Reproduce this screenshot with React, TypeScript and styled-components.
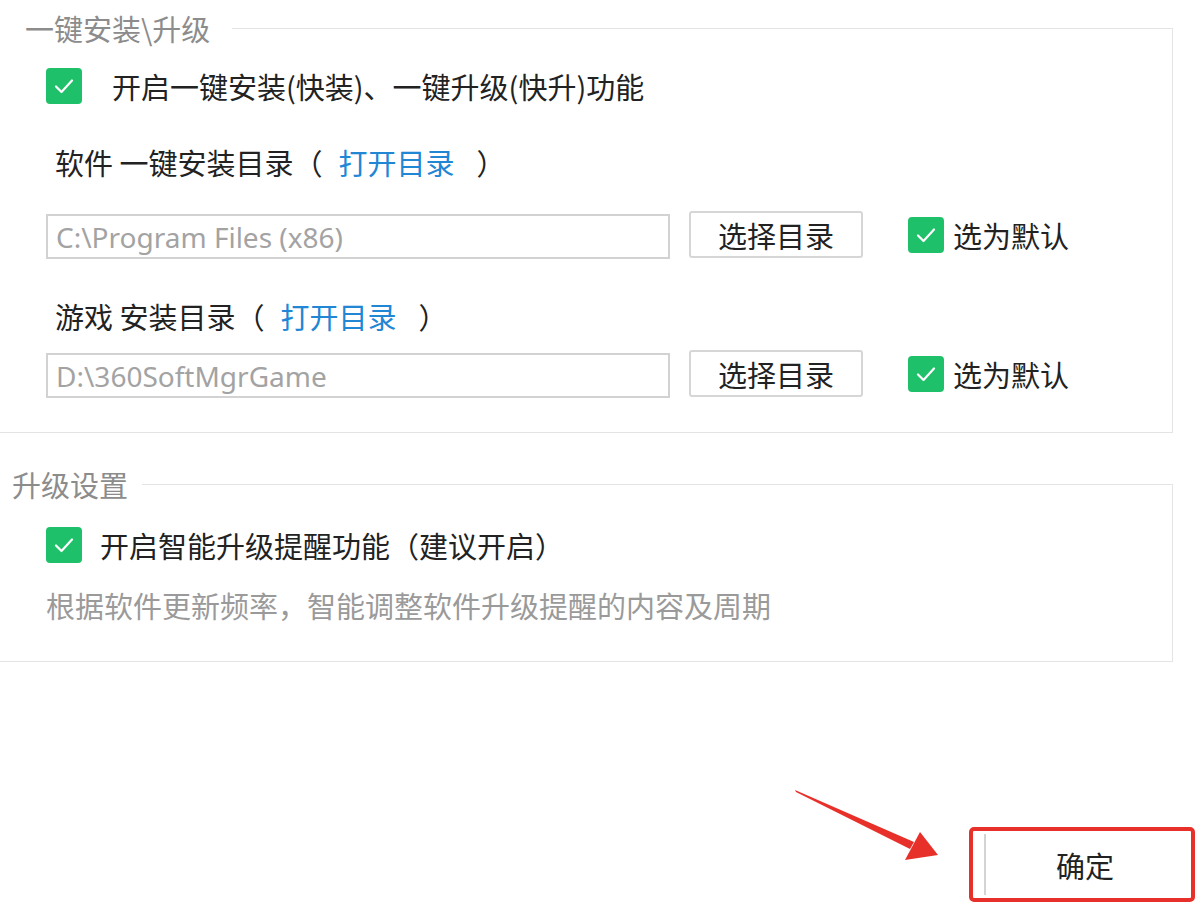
import styled, { createGlobalStyle } from "styled-components";

const GlobalStyle = createGlobalStyle`
  html, body {
    margin: 0;
    padding: 0;
    background: #ffffff;
  }
  body {
    font-family: "Noto Sans CJK SC", "Noto Sans", sans-serif;
    color: #222222;
  }
`;

function Check() {
  return (
    <Box>
      <svg width="22" height="22" viewBox="0 0 22 22">
        <polyline
          points="3,11.5 8.5,17 19,5.5"
          fill="none"
          stroke="#ffffff"
          strokeWidth="2.2"
          strokeLinecap="round"
          strokeLinejoin="round"
        />
      </svg>
    </Box>
  );
}

function Arrow() {
  return (
    <ArrowSvg width="156" height="80" viewBox="0 0 156 80">
      <polygon points="6,4 125,56 121,63 7,6" fill="#e8302a" />
      <polygon points="131,46 149,69 116,74" fill="#e8302a" />
    </ArrowSvg>
  );
}

export default function App() {
  return (
    <>
      <GlobalStyle />
      <Page>
        <Group>
          <Header>
            <Title $indent={25}>一键安装\升级</Title>
            <Rule $gap={22} />
          </Header>
          <Body $top={22} $bottom={34}>
            <CheckRow $gap={30}>
              <Check />
              <span>开启一键安装(快装)、一键升级(快升)功能</span>
            </CheckRow>
            <DirLabel $top={40}>
              软件 一键安装目录（<Link>打开目录</Link>）
            </DirLabel>
            <PathRow $top={30}>
              <PathInput readOnly value="C:\Program Files (x86)" />
              <PickButton>选择目录</PickButton>
              <CheckRow $gap={9}>
                <Check />
                <span>选为默认</span>
              </CheckRow>
            </PathRow>
            <DirLabel $top={39}>
              游戏 安装目录（<Link>打开目录</Link>）
            </DirLabel>
            <PathRow $top={15}>
              <PathInput readOnly value="D:\360SoftMgrGame" />
              <PickButton>选择目录</PickButton>
              <CheckRow $gap={9}>
                <Check />
                <span>选为默认</span>
              </CheckRow>
            </PathRow>
          </Body>
        </Group>

        <Group $top={33}>
          <Header>
            <Title $indent={12}>升级设置</Title>
            <Rule $gap={14} />
          </Header>
          <Body $top={25} $bottom={41}>
            <CheckRow $gap={18}>
              <Check />
              <span>开启智能升级提醒功能（建议开启）</span>
            </CheckRow>
            <Hint>根据软件更新频率，智能调整软件升级提醒的内容及周期</Hint>
          </Body>
        </Group>

        <Footer>
          <Arrow />
          <Highlight>
            <OkButton>确定</OkButton>
          </Highlight>
        </Footer>
      </Page>
    </>
  );
}

const Page = styled.div`
  width: 1173px;
  padding-top: 10px;
  display: flex;
  flex-direction: column;
`;

const Group = styled.section<{ $top?: number }>`
  margin-top: ${(p) => p.$top ?? 0}px;
  display: flex;
  flex-direction: column;
`;

const Header = styled.div`
  display: flex;
  height: 36px;
  align-items: stretch;
`;

const Title = styled.div<{ $indent: number }>`
  padding-left: ${(p) => p.$indent}px;
  font-size: 29px;
  line-height: 36px;
  color: #8c8c8c;
  white-space: nowrap;
`;

const Rule = styled.div<{ $gap: number }>`
  flex: 1;
  margin-left: ${(p) => p.$gap}px;
  margin-top: 18px;
  border-top: 1px solid #e4e4e4;
  border-right: 1px solid #e4e4e4;
`;

const Body = styled.div<{ $top: number; $bottom: number }>`
  display: flex;
  flex-direction: column;
  align-items: flex-start;
  padding: ${(p) => p.$top}px 0 ${(p) => p.$bottom}px 46px;
  border-right: 1px solid #e4e4e4;
  border-bottom: 1px solid #e4e4e4;
`;

const CheckRow = styled.label<{ $gap: number }>`
  display: flex;
  align-items: center;
  gap: ${(p) => p.$gap}px;
  font-size: 29px;
  line-height: 36px;
  color: #222222;
  white-space: nowrap;
`;

const Box = styled.span`
  width: 36px;
  height: 36px;
  border-radius: 4px;
  background: #1ec169;
  display: flex;
  align-items: center;
  justify-content: center;
  flex-shrink: 0;
`;

const DirLabel = styled.div<{ $top: number }>`
  margin-top: ${(p) => p.$top}px;
  margin-left: 9px;
  font-size: 29px;
  line-height: 36px;
  color: #222222;
  white-space: pre;
`;

const Link = styled.a`
  margin: 0 22px 0 16px;
  color: #2186d4;
  cursor: pointer;
`;

const PathRow = styled.div<{ $top: number }>`
  margin-top: ${(p) => p.$top}px;
  display: flex;
  align-items: center;
`;

const PathInput = styled.input`
  box-sizing: border-box;
  width: 624px;
  height: 45px;
  margin-top: 4px;
  padding: 0 8px;
  border: 2px solid #d2d2d2;
  border-radius: 0;
  outline: none;
  font-family: "Noto Sans", "Noto Sans CJK SC", sans-serif;
  font-size: 28px;
  color: #a3a3a3;
  background: #ffffff;
`;

const PickButton = styled.button`
  box-sizing: border-box;
  width: 174px;
  height: 47px;
  margin-left: 19px;
  margin-right: 45px;
  border: 2px solid #d6d6d6;
  border-radius: 3px;
  background: #ffffff;
  font-family: "Noto Sans CJK SC", sans-serif;
  font-size: 29px;
  color: #222222;
`;

const Hint = styled.div`
  margin-top: 27px;
  font-size: 29px;
  line-height: 30px;
  color: #9a9a9a;
  white-space: nowrap;
`;

const Footer = styled.div`
  margin-top: 124px;
  width: 1195px;
  display: flex;
  justify-content: flex-end;
  align-items: flex-start;
`;

const ArrowSvg = styled.svg`
  margin-right: 24px;
  flex-shrink: 0;
`;

const Highlight = styled.div`
  margin-top: 41px;
  box-sizing: border-box;
  width: 226px;
  height: 75px;
  border: 4px solid #e8302a;
  border-radius: 5px;
  padding: 3px 7px 3px 11px;
  display: flex;
`;

const OkButton = styled.button`
  flex: 1;
  border: none;
  border-left: 2px solid #d4d4d4;
  background: #ffffff;
  font-family: "Noto Sans CJK SC", sans-serif;
  font-size: 29px;
  color: #222222;
`;
